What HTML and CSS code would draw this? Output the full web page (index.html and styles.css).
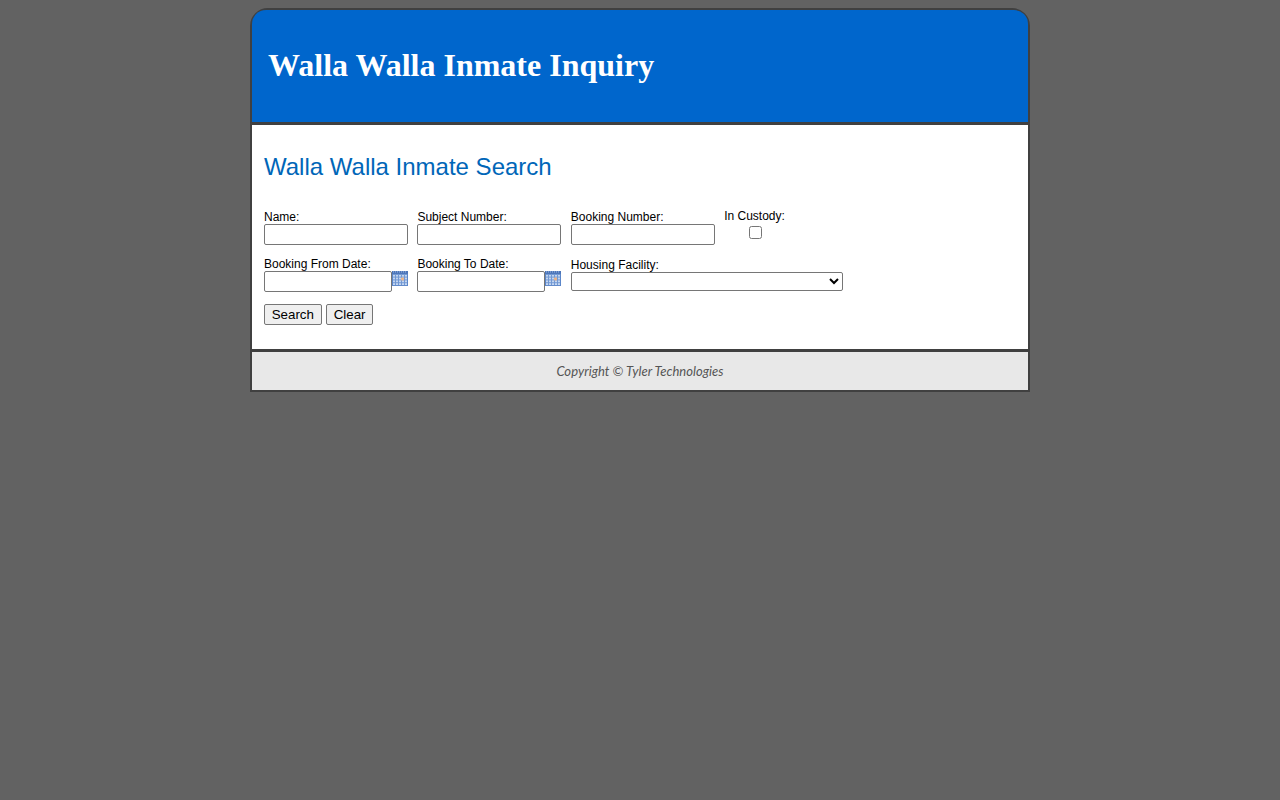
FILE: index.html
```html
<!DOCTYPE html>
<html>
<head>
    <title>Walla Walla Inmate Inquiry</title>
    <link rel="stylesheet" href="styles.css">
</head>
<body>
    <div class="wrapper">
        <div class="header">
            <h1>Walla Walla Inmate Inquiry</h1>
        </div>

        <div class="content">
            <h2>Walla Walla Inmate Search</h2>

            <form class="search-form">
                <div class="form-row first-row">
                    <div class="field">
                        <label class="field-label" for="name">Name:</label>
                        <input type="text" class="text-input" id="name">
                    </div>
                    <div class="field">
                        <label class="field-label" for="subject-number">Subject Number:</label>
                        <input type="text" class="text-input" id="subject-number">
                    </div>
                    <div class="field">
                        <label class="field-label" for="booking-number">Booking Number:</label>
                        <input type="text" class="text-input" id="booking-number">
                    </div>
                    <div class="field custody-field">
                        <label class="field-label" for="in-custody">In Custody:</label>
                        <input type="checkbox" class="check-input" id="in-custody">
                    </div>
                </div>

                <div class="form-row second-row">
                    <div class="field">
                        <label class="field-label" for="from-date">Booking From Date:</label>
                        <div class="date-group">
                            <input type="text" class="text-input date-input" id="from-date">
                            <svg class="calendar-icon" viewBox="0 0 16 16" preserveAspectRatio="none">
                                <rect x="0" y="0" width="16" height="16" fill="#5b86c9"/>
                                <rect x="0" y="0" width="16" height="3" fill="#4a74b8"/>
                                <path d="M1 1h14" stroke="#a9c2e8" stroke-dasharray="1 1"/>
                                <rect x="1" y="4" width="14" height="11" fill="#c4d6f0"/>
                                <path d="M1 6.5h14M1 9.5h14M1 12.5h14M3.5 4v11M6.5 4v11M9.5 4v11M12.5 4v11" stroke="#6f97d3"/>
                                <rect x="9" y="7" width="3" height="3" fill="#e8b48c"/>
                            </svg>
                        </div>
                    </div>
                    <div class="field">
                        <label class="field-label" for="to-date">Booking To Date:</label>
                        <div class="date-group">
                            <input type="text" class="text-input date-input" id="to-date">
                            <svg class="calendar-icon" viewBox="0 0 16 16" preserveAspectRatio="none">
                                <rect x="0" y="0" width="16" height="16" fill="#5b86c9"/>
                                <rect x="0" y="0" width="16" height="3" fill="#4a74b8"/>
                                <path d="M1 1h14" stroke="#a9c2e8" stroke-dasharray="1 1"/>
                                <rect x="1" y="4" width="14" height="11" fill="#c4d6f0"/>
                                <path d="M1 6.5h14M1 9.5h14M1 12.5h14M3.5 4v11M6.5 4v11M9.5 4v11M12.5 4v11" stroke="#6f97d3"/>
                                <rect x="9" y="7" width="3" height="3" fill="#e8b48c"/>
                            </svg>
                        </div>
                    </div>
                    <div class="field facility-field">
                        <label class="field-label" for="facility">Housing Facility:</label>
                        <select class="select-input" id="facility">
                            <option></option>
                        </select>
                    </div>
                </div>

                <div class="button-row">
                    <button type="button" class="form-button">Search</button>
                    <button type="button" class="form-button">Clear</button>
                </div>
            </form>
        </div>

        <div class="footer">Copyright &copy; Tyler Technologies</div>
    </div>
</body>
</html>
```

FILE: styles.css
```css
* {
    box-sizing: border-box;
}

body {
    margin: 0;
    padding-top: 8px;
    font-family: "Liberation Sans", Arial, sans-serif;
    background-color: #626262;
}

.wrapper {
    width: 780px;
    margin: 0 auto;
    background-color: #404040;
    border: 2px solid #404040;
    border-radius: 18px 18px 0 0;
}

.header {
    height: 115px;
    padding-left: 16px;
    display: flex;
    align-items: center;
    background-color: #0066CC;
    border-bottom: 3px solid #404040;
    border-radius: 14px 14px 0 0;
}

.header h1 {
    margin: 0 0 2px 0;
    color: #fff;
    font-family: "Liberation Serif", "Times New Roman", serif;
    font-size: 32px;
    font-weight: bold;
}

.content {
    height: 224px;
    padding: 28px 12px 0 12px;
    background-color: #fff;
}

.content h2 {
    margin: 0 0 29px 0;
    color: #0066B8;
    font-size: 24px;
    font-weight: normal;
    line-height: 28px;
}

.form-row {
    display: flex;
}

.first-row {
    height: 47px;
}

.second-row {
    height: 47px;
}

.field {
    width: 153.4px;
    display: flex;
    flex-direction: column;
    align-items: flex-start;
}

.field-label {
    color: #000;
    font-size: 12px;
    line-height: 14px;
}

.custody-field {
    margin-top: -1px;
}

.facility-field {
    width: 272px;
    padding-top: 1px;
}

.text-input {
    width: 144px;
    height: 21px;
    margin: 0;
    border: 1px solid #767676;
    border-radius: 2px;
    background-color: #fff;
}

.date-group {
    display: flex;
    align-items: flex-start;
}

.date-input {
    width: 128px;
}

.calendar-icon {
    display: block;
    width: 16px;
    height: 15px;
}

.check-input {
    width: 13px;
    height: 13px;
    margin: 3px 0 0 25px;
}

.select-input {
    width: 272px;
    height: 19px;
    margin: 0;
    border: 1px solid #767676;
    border-radius: 2px;
    background-color: #fff;
}

.button-row {
    display: flex;
    gap: 4.4px;
}

.form-button {
    height: 21px;
    padding: 0 6.7px;
    color: #000;
    font-family: "Liberation Sans", Arial, sans-serif;
    font-size: 13.33px;
    background-color: #efefef;
    border: 1px solid #767676;
    border-radius: 2px;
}

.footer {
    height: 41px;
    padding-top: 12px;
    text-align: center;
    color: #555;
    font-family: Lato, sans-serif;
    font-size: 13px;
    font-style: italic;
    letter-spacing: 0.03px;
    line-height: 15px;
    background-color: #E8E8E8;
    border-top: 3px solid #404040;
}
```
